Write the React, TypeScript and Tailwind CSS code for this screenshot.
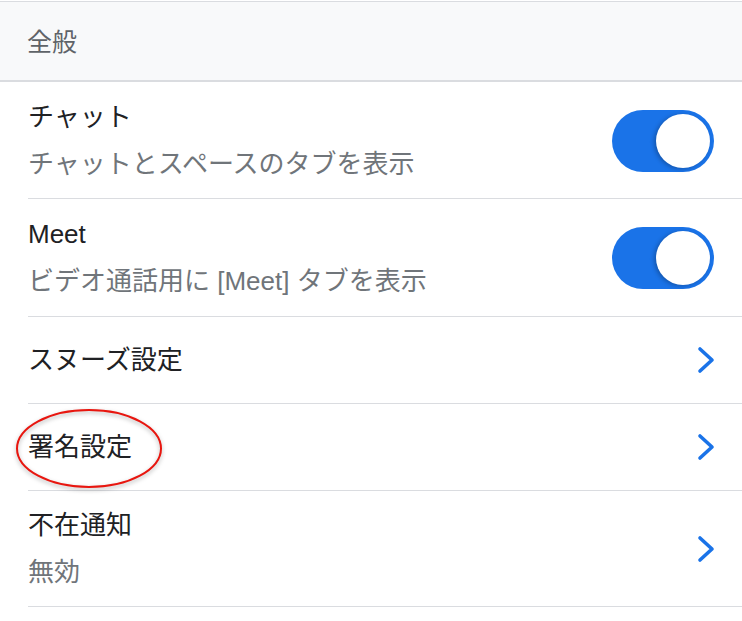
import React from "react";

type Row = {
  title: string;
  sub?: string;
  kind: "toggle" | "link";
  circled?: boolean;
  pad: string;
};

const rows: Row[] = [
  { title: "チャット", sub: "チャットとスペースのタブを表示", kind: "toggle", pad: "pt-[17px] pb-[16px]" },
  { title: "Meet", sub: "ビデオ通話用に [Meet] タブを表示", kind: "toggle", pad: "pt-[17px] pb-[17px]" },
  { title: "スヌーズ設定", kind: "link", pad: "py-[25px]" },
  { title: "署名設定", kind: "link", circled: true, pad: "py-[25px]" },
  { title: "不在通知", sub: "無効", kind: "link", pad: "pt-[16px] pb-[16px]" },
];

const Toggle = () => (
  <div className="relative w-[102px] h-[62px] rounded-full bg-[#1a73e8] shrink-0">
    <div className="absolute right-[4px] top-[4px] w-[54px] h-[54px] rounded-full bg-white shadow-[-2px_1px_4px_rgba(0,0,0,0.25)]" />
  </div>
);

const Chevron = () => (
  <svg width="18" height="28" viewBox="0 0 18 28" className="shrink-0 mr-[-1px]">
    <polyline
      points="3,3 15,14 3,25"
      fill="none"
      stroke="#1a73e8"
      strokeWidth="3.6"
      strokeLinecap="round"
      strokeLinejoin="round"
    />
  </svg>
);

const SettingRow = ({ row }: { row: Row }) => {
  return (
    <div
      className={`relative flex items-center justify-between ml-[28px] pr-[28px] border-b border-[#dadce0] ${row.pad}`}
    >
      <div className="flex flex-col gap-[11px]">
        <div className="text-[26px] leading-[36px] text-[#202124]">{row.title}</div>
        {row.sub && (
          <div className="text-[26px] leading-[36px] text-[#70757a]">{row.sub}</div>
        )}
      </div>
      {row.kind === "toggle" ? <Toggle /> : <Chevron />}
      {row.circled && (
        <svg
          width="148"
          height="81"
          viewBox="0 0 148 81"
          className="absolute left-[-13px] top-[4px] drop-shadow-[0_2px_2px_rgba(0,0,0,0.3)]"
        >
          <ellipse cx="74" cy="40.5" rx="72" ry="38.5" fill="none" stroke="#e8160f" strokeWidth="2" />
        </svg>
      )}
    </div>
  );
};

export default function App() {
  return (
    <div className="w-[742px] h-[621px] bg-white font-['Liberation_Sans','Noto_Sans_CJK_JP',sans-serif]">
      <div className="mt-px border-t border-[#dadce0] border-b-2 border-b-[#dadce0] bg-[#f8f9fa] h-[81px] flex items-center pl-[27px] pt-[3px]">
        <span className="text-[25px] text-[#5f6368]">全般</span>
      </div>
      {rows.map((r) => (
        <SettingRow key={r.title} row={r} />
      ))}
    </div>
  );
}
